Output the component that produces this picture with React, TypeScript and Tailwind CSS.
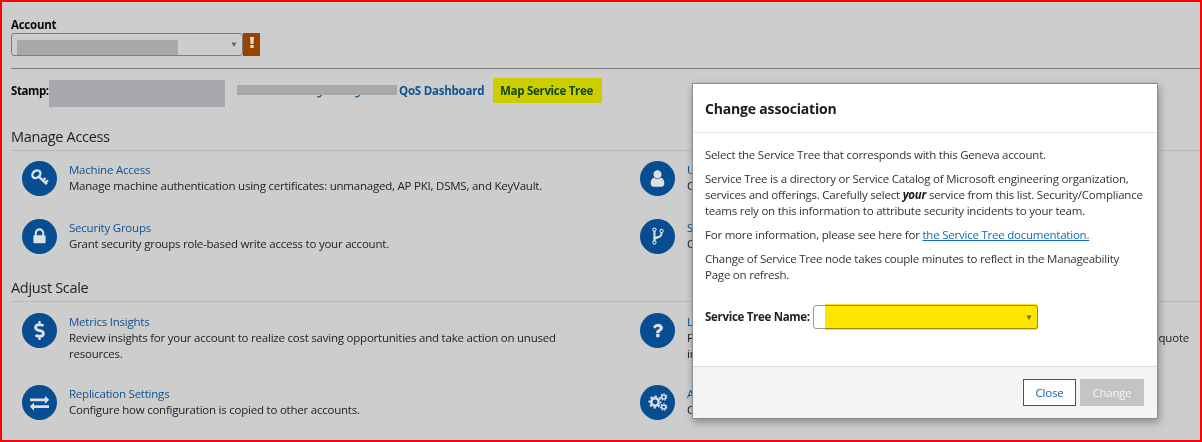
import type { ReactNode } from "react";
import { FaDollarSign } from "react-icons/fa";

function Glyph({ d, size = 20 }: { d: string; size?: number }) {
  return (
    <svg width={size} height={size} viewBox="0 0 1792 1792" fill="currentColor">
      <path d={d} />
    </svg>
  );
}

const LOCK =
  "M640 768h512v-192q0-106-75-181t-181-75-181 75-75 181v192zm832 96v576q0 40-28 68t-68 28h-960q-40 0-68-28t-28-68v-576q0-40 28-68t68-28h32v-192q0-184 132-316t316-132 316 132 132 316v192h32q40 0 68 28t28 68z";
const USER =
  "M1536 1399q0 109-62.5 187t-150.5 78h-854q-88 0-150.5-78t-62.5-187q0-85 8.500-160.500t31.500-152 58.500-131 94-89 134.500-34.500q131 128 313 128t313-128q76 0 134.500 34.500t94 89 58.500 131 31.500 152 8.500 160.500zm-256-887q0 159-112.500 271.500t-271.500 112.500-271.500-112.500-112.500-271.500 112.500-271.500 271.500-112.500 271.500 112.500 112.500 271.500z";
const FORK =
  "M672 1472q0-40-28-68t-68-28-68 28-28 68 28 68 68 28 68-28 28-68zm0-1152q0-40-28-68t-68-28-68 28-28 68 28 68 68 28 68-28 28-68zm640 128q0-40-28-68t-68-28-68 28-28 68 28 68 68 28 68-28 28-68zm96 0q0 52-26 96.500t-70 69.500q-2 287-226 414-67 38-203 81-128 40-169.500 71t-41.500 100v26q44 25 70 69.500t26 96.500q0 80-56 136t-136 56-136-56-56-136q0-52 26-96.500t70-69.500v-820q-44-25-70-69.500t-26-96.500q0-80 56-136t136-56 136 56 56 136q0 52-26 96.500t-70 69.500v497q54-26 154-57 55-17 87.500-29.500t70.500-31 59-39.500 40.500-51 28-69.500 8.500-91.500q-44-25-70-69.500t-26-96.500q0-80 56-136t136-56 136 56 56 136z";
const QUESTION =
  "M1088 1256v240q0 16-12 28t-28 12h-240q-16 0-28-12t-12-28v-240q0-16 12-28t28-12h240q16 0 28 12t12 28zm316-600q0 54-15.500 101t-35 76.500-55 59.500-57.500 43.500-61 35.500q-41 23-68.500 65t-27.500 67q0 17-12 32.500t-28 15.500h-240q-15 0-25.500-18.500t-10.500-37.500v-45q0-83 65-156.500t143-108.500q59-27 84-56t25-76q0-42-46.500-74t-107.500-32q-65 0-108 29-35 25-107 115-13 16-31 16-12 0-25-8l-164-125q-13-10-15.500-25t5.500-28q160-266 464-266 80 0 161 31t146 83 106 127.500 41 158.500z";
const EXCHANGE =
  "M1792 1184v192q0 13-9.500 22.500t-22.500 9.500h-1376v192q0 13-9.500 22.500t-22.500 9.500q-12 0-24-10l-319-320q-9-9-9-22 0-14 9-23l320-320q9-9 23-9 13 0 22.500 9.500t9.500 22.500v192h1376q13 0 22.500 9.500t9.500 22.500zm0-544q0 14-9 23l-320 320q-9 9-23 9-13 0-22.500-9.500t-9.500-22.500v-192h-1376q-13 0-22.500-9.500t-9.500-22.500v-192q0-13 9.500-22.500t22.500-9.500h1376v-192q0-14 9-23t23-9q12 0 24 10l319 319q9 9 9 23z";

function KeyIcon() {
  return (
    <svg width="20" height="20" viewBox="0 0 20 20" fill="none" stroke="currentColor">
      <ellipse cx="6.400" cy="6.200" rx="4.400" ry="3.400" transform="rotate(-38 6.400 6.200)" strokeWidth="2.400" />
      <path d="M9 8.800l7.900 7.400" strokeWidth="2.500" />
      <path d="M12.900 12.500l2.600-2.500M15.300 14.800l2.700-2.500" strokeWidth="2.200" />
    </svg>
  );
}

function CogsIcon() {
  return (
    <svg width="20" height="20" viewBox="0 0 20 20" fill="none" stroke="currentColor">
      <circle cx="7" cy="10" r="3.700" strokeWidth="2.500" />
      <circle cx="7" cy="10" r="5.700" strokeWidth="1.700" strokeDasharray="2.400 2.077" strokeDashoffset="1.200" />
      <circle cx="15.700" cy="5" r="2" strokeWidth="1.500" />
      <circle cx="15.700" cy="5" r="3.200" strokeWidth="1.100" strokeDasharray="1.500 1.372" />
      <circle cx="15.700" cy="15" r="2" strokeWidth="1.500" />
      <circle cx="15.700" cy="15" r="3.200" strokeWidth="1.100" strokeDasharray="1.500 1.372" />
    </svg>
  );
}

function Item({ icon, title, children }: { icon: ReactNode; title: string; children: ReactNode }) {
  return (
    <div className="flex gap-[12px]">
      <div className="flex h-[35px] w-[35px] shrink-0 items-center justify-center rounded-full bg-[#064d92] pb-px text-[#dcdfe4]">
        {icon}
      </div>
      <div className="grow pt-px leading-[16px]">
        <div className="text-[#0f5292]">{title}</div>
        <div>{children}</div>
      </div>
    </div>
  );
}

function Heading({ children }: { children: ReactNode }) {
  return (
    <h2 className="ml-[9px] h-[25px] border-b border-[#b9b9b9] text-[14.5px] leading-[21px] tracking-[-0.32px] text-[#222]">
      {children}
    </h2>
  );
}

function Dialog() {
  return (
    <div className="absolute top-[81px] left-[690px] flex h-[336px] w-[466px] flex-col border border-[#8c8c8c] bg-white text-[#333] shadow-[1px_3px_8px_rgba(0,0,0,0.35)]">
      <div className="h-[49px] border-b border-[#eaeaea] pl-[12px] text-[14px] leading-[49px] font-bold tracking-[-0.18px] text-[#1a1a1a]">
        Change association
      </div>
      <div className="flex grow flex-col gap-[8px] pt-[14px] pl-[12px] leading-[16px] whitespace-nowrap">
        <p>Select the Service Tree that corresponds with this Geneva account.</p>
        <p>
          Service Tree is a directory or Service Catalog of Microsoft engineering organization,
          <br />
          services and offerings. Carefully select <b className="text-[#1a1a1a] italic">your</b> service from this list. Security/Compliance
          <br />
          teams rely on this information to attribute security incidents to your team.
        </p>
        <p>
          For more information, please see here for{" "}
          <a className="text-[#0f6cbd] underline">the Service Tree documentation.</a>
        </p>
        <p>
          Change of Service Tree node takes couple minutes to reflect in the Manageability
          <br />
          Page on refresh.
        </p>
        <div className="mt-[14px] flex items-center">
          <span className="w-[108px] pb-px font-bold tracking-[-0.3px] text-[#222]">Service Tree Name:</span>
          <div className="relative flex h-[24px] w-[225px] items-center justify-end rounded-[3px] border border-[#999] bg-white pr-[5px]">
            <svg width="6" height="5" viewBox="0 0 6 5">
              <path d="M0.5 0.5h5L3 5z" fill="#777" />
            </svg>
            <div className="absolute -top-[2px] -right-px -bottom-[2px] left-[11px] rounded-r-[2px] bg-[#ffe600] mix-blend-multiply" />
          </div>
        </div>
      </div>
      <div className="flex h-[52px] items-center justify-end gap-[4px] border-t border-[#dcdcdc] bg-[#f4f4f4] pr-[13px]">
        <button className="h-[27px] w-[53px] border border-[#0f62ae] bg-white text-[#0f62ae]">Close</button>
        <button className="h-[27px] w-[64px] bg-[#c4c4c4] text-[#f5f5f5]">Change</button>
      </div>
    </div>
  );
}

export default function App() {
  return (
    <div className="relative h-[442px] w-[1202px] overflow-hidden border-2 border-[#fb0505] bg-[#cdcdcd] font-['Open_Sans','Noto_Sans',sans-serif] text-[11.5px] tracking-[-0.225px] text-[#222]">
      <div className="ml-[9px] pt-[14px] leading-[17px] font-bold tracking-[-0.25px] text-[#080808]">Account</div>
      <div className="ml-[9px] flex h-[23px]">
        <div className="flex w-[232px] items-center justify-between rounded-[3px] border border-[#7d7d7d] pr-[5px] pl-[5px]">
          <div className="mt-[6px] h-[15px] w-[161px] bg-[#a7a8ab]" />
          <svg width="6" height="5" viewBox="0 0 6 5">
            <path d="M0.5 0.5h5L3 5z" fill="#666" />
          </svg>
        </div>
        <div className="flex w-[17px] items-start justify-center bg-[#974400] pt-[4px]">
          <svg width="4" height="11" viewBox="0 0 4 11" fill="#e8dccb">
            <path d="M0 0h4l-.6 7H.6zM.3 8h3.400v3H.3z" />
          </svg>
        </div>
      </div>
      <div className="mt-[12px] ml-[9px] h-px bg-[#7b7b7b]" />

      <div className="ml-[9px] flex h-[57px] pt-[9px] leading-[26px] font-bold tracking-[-0.3px] whitespace-nowrap text-[#080808]">
        <span className="w-[38px] tracking-[-0.4px]">Stamp:</span>
        <div className="mt-[2px] h-[27px] w-[176px] bg-[#a7a8ab]" />
        <div className="mt-[7px] ml-[12px] h-[10px] w-[160px] bg-[#a7a8ab]">
          <svg width="160" height="13" viewBox="0 0 160 13" fill="none" stroke="#0f5292" strokeWidth="1.2">
            <path d="M80 11.500q3 1.200 4.500-1.500M118 11.500q3 1.200 4.500-1.500" />
          </svg>
        </div>
        <span className="ml-[2px] w-[94px] tracking-[-0.22px] text-[#0f5292]">QoS Dashboard</span>
        <span className="h-[25px] w-[109px] bg-[#cdcd00] pr-[2px] text-center text-[#0c4a10]">Map Service Tree</span>
      </div>

      <Heading>Manage Access</Heading>
      <div className="mt-[10px] ml-[20px] grid grid-cols-[618px_1fr] gap-y-[10px] [&>div]:h-[48px]">
        <Item icon={<KeyIcon />} title="Machine Access">
          Manage machine authentication using certificates: unmanaged, AP PKI, DSMS, and KeyVault.
        </Item>
        <Item icon={<Glyph d={USER} size={19} />} title="U">C</Item>
        <Item icon={<Glyph d={LOCK} size={19} />} title="Security Groups">
          Grant security groups role-based write access to your account.
        </Item>
        <Item icon={<Glyph d={FORK} />} title="S">C</Item>
      </div>

      <div className="mt-[10px]">
        <Heading>Adjust Scale</Heading>
      </div>
      <div className="mt-[11px] ml-[20px] grid grid-cols-[618px_1fr] gap-y-[10px] [&>div]:h-[62px]">
        <Item icon={<FaDollarSign size={19} />} title="Metrics Insights">
          Review insights for your account to realize cost saving opportunities and take action on unused
          <br />
          resources.
        </Item>
        <Item icon={<Glyph d={QUESTION} size={19} />} title="L">
          <div className="flex justify-between pr-[11px]">
            <span>F</span>
            <span>quote</span>
          </div>
          in
        </Item>
        <Item icon={<Glyph d={EXCHANGE} size={19} />} title="Replication Settings">
          Configure how configuration is copied to other accounts.
        </Item>
        <Item icon={<CogsIcon />} title="A">C</Item>
      </div>

      <Dialog />
    </div>
  );
}
